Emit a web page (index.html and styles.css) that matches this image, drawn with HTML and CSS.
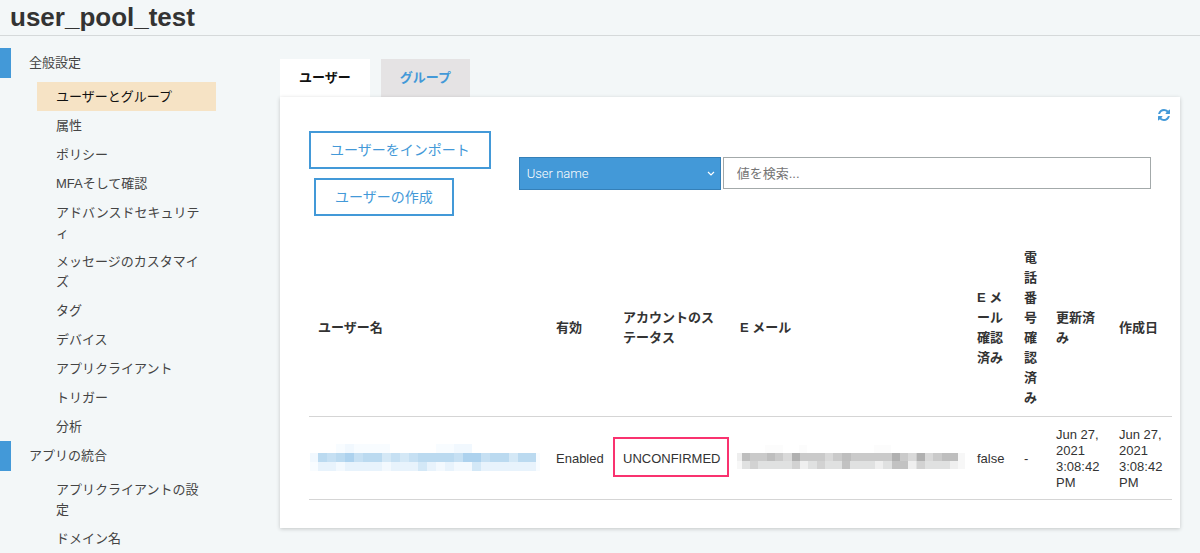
FILE: index.html
```html
<!DOCTYPE html>
<html lang="ja">

<head>
    <meta charset="utf-8">
    <title>user_pool_test</title>
    <link rel="stylesheet" href="styles.css">
</head>

<body>
    <header class="page-header">
        <h1>user_pool_test</h1>
    </header>

    <div class="layout">
        <nav class="sidebar">
            <a class="section" href="#general">全般設定</a>
            <ul>
                <li><a class="active" href="#users">ユーザーとグループ</a></li>
                <li><a href="#attributes">属性</a></li>
                <li><a href="#policies">ポリシー</a></li>
                <li><a href="#mfa">MFAそして確認</a></li>
                <li><a href="#security">アドバンスドセキュリティ</a></li>
                <li><a href="#messages">メッセージのカスタマイズ</a></li>
                <li><a href="#tags">タグ</a></li>
                <li><a href="#devices">デバイス</a></li>
                <li><a href="#clients">アプリクライアント</a></li>
                <li><a href="#triggers">トリガー</a></li>
                <li><a href="#analytics">分析</a></li>
            </ul>
            <a class="section" href="#integration">アプリの統合</a>
            <ul>
                <li><a href="#client-settings">アプリクライアントの設定</a></li>
                <li><a href="#domain">ドメイン名</a></li>
            </ul>
        </nav>

        <main class="content">
            <div class="tabs">
                <a class="tab selected" href="#users">ユーザー</a>
                <a class="tab" href="#groups">グループ</a>
            </div>

            <div class="panel">
                <button class="refresh" type="button" aria-label="更新">
                    <svg viewBox="0 0 1536 1536" width="12" height="12">
                        <path fill="currentColor" d="M1511 928q0 5-1 7-64 268-268 434.500t-478 166.500q-146 0-282.500-55t-243.500-157l-129 129q-19 19-45 19t-45-19-19-45v-448q0-26 19-45t45-19h448q26 0 45 19t19 45-19 45l-137 137q71 66 161 102t187 36q134 0 250-65t186-179q11-17 53-117 8-23 30-23h192q13 0 22.500 9.500t9.500 22.500zm25-800v448q0 26-19 45t-45 19h-448q-26 0-45-19t-19-45 19-45l138-138q-148-137-349-137-134 0-250 65t-186 179q-11 17-53 117-8 23-30 23h-199q-13 0-22.500-9.500t-9.500-22.500v-7q65-268 270-434.500t480-166.500q146 0 284 55.500t245 156.500l130-129q19-19 45-19t45 19 19 45z"/>
                    </svg>
                </button>

                <div class="toolbar">
                    <div class="actions">
                        <button type="button">ユーザーをインポート</button>
                        <button class="create" type="button">ユーザーの作成</button>
                    </div>
                    <div class="search">
                        <div class="select-wrap">
                            <select aria-label="検索する属性">
                                <option>User name</option>
                                <option>Email</option>
                            </select>
                            <svg class="chevron" viewBox="0 0 8 6" width="8" height="6">
                                <path d="M1 1l3 3 3-3" fill="none" stroke="#fff" stroke-width="1.200"/>
                            </svg>
                        </div>
                        <input type="text" aria-label="値を検索" placeholder="値を検索...">
                    </div>
                </div>

                <table class="users">
                    <colgroup>
                        <col>
                        <col class="col-enabled">
                        <col class="col-status">
                        <col>
                        <col class="col-verified">
                        <col class="col-phone">
                        <col class="col-date">
                        <col class="col-date">
                    </colgroup>
                    <thead>
                        <tr>
                            <th>ユーザー名</th>
                            <th>有効</th>
                            <th>アカウントのステータス</th>
                            <th>E メール</th>
                            <th>E メール確認済み</th>
                            <th>電話番号確認済み</th>
                            <th>更新済み</th>
                            <th>作成日</th>
                        </tr>
                    </thead>
                    <tbody>
                        <tr>
                            <td>
                                <svg class="mosaic" viewBox="0 0 230 27" width="230" height="27" shape-rendering="crispEdges">
                                    <path fill="#f8fcff" d="M26 0h9v9h-9zM44 0h36v9h-36zM126 0h18v9h-18z"/>
                                    <path fill="#f1f8fe" d="M35 0h9v9h-9zM144 0h18v9h-18zM0 9h8v9h-8z"/>
                                    <path fill="#f8fcff" d="M0 18h8v9h-8zM226 9h4v18h-4z"/>
                                    <path fill="#bbdaf0" d="M8 9h218v9h-218z"/>
                                    <path fill="#c6e0f3" d="M17 9h9v9h-9zM44 9h9v9h-9zM81 9h9v9h-9zM99 9h9v9h-9zM144 9h9v9h-9zM171 9h9v9h-9z"/>
                                    <path fill="#d4e8f6" d="M72 9h9v9h-9zM90 9h9v9h-9zM199 9h9v9h-9z"/>
                                    <path fill="#add2ee" d="M35 9h9v9h-9zM153 9h18v9h-18z"/>
                                    <path fill="#e8f3fc" d="M8 18h218v9h-218z"/>
                                    <path fill="#f3f9fe" d="M26 18h9v9h-9zM72 18h9v9h-9zM126 18h9v9h-9zM144 18h18v9h-18z"/>
                                    <path fill="#d3e8f7" d="M108 18h9v9h-9zM162 18h9v9h-9z"/>
                                </svg>
                            </td>
                            <td>Enabled</td>
                            <td><span class="status">UNCONFIRMED</span></td>
                            <td>
                                <svg class="mosaic" viewBox="0 0 230 27" width="230" height="27" shape-rendering="crispEdges">
                                    <path fill="#fcfcfc" d="M29 1h18v8h-18zM63 1h8v8h-8zM138 1h17v8h-17z"/>
                                    <path fill="#eee" d="M1 9h5v8h-5z"/>
                                    <path fill="#f7f7f7" d="M1 17h5v8h-5zM222 9h7v16h-7z"/>
                                    <path fill="#cacaca" d="M6 9h216v8h-216z"/>
                                    <path fill="#bebebe" d="M6 9h8v8h-8zM31 9h8v8h-8zM106 9h9v8h-9zM206 9h16v8h-16z"/>
                                    <path fill="#d9d9d9" d="M47 9h9v8h-9zM89 9h8v8h-8zM172 9h8v8h-8zM189 9h8v8h-8z"/>
                                    <path fill="#b0b0b0" d="M56 9h8v8h-8zM156 9h8v8h-8zM181 9h8v8h-8z"/>
                                    <path fill="#e0e1e1" d="M6 17h216v8h-216z"/>
                                    <path fill="#d2d2d2" d="M14 17h8v8h-8zM56 17h8v8h-8zM81 17h8v8h-8zM181 17h8v8h-8z"/>
                                    <path fill="#efefef" d="M64 17h8v8h-8zM139 17h8v8h-8zM172 17h8v8h-8zM214 17h8v8h-8z"/>
                                    <path fill="#c2c2c2" d="M106 17h8v8h-8zM156 17h16v8h-16z"/>
                                </svg>
                            </td>
                            <td>false</td>
                            <td>-</td>
                            <td>Jun 27, 2021 3:08:42 PM</td>
                            <td>Jun 27, 2021 3:08:42 PM</td>
                        </tr>
                    </tbody>
                </table>
            </div>
        </main>
    </div>
</body>

</html>
```

FILE: styles.css
```css
* {
    box-sizing: border-box;
}

body {
    margin: 0;
    background-color: #f3f7f8;
    color: #333;
    font-family: "Liberation Sans", "Noto Sans CJK JP", sans-serif;
    font-size: 13px;
    line-height: 20px;
    line-break: loose;
}

a {
    text-decoration: none;
}

button,
input,
select {
    font-family: inherit;
}

.page-header {
    height: 36px;
    padding: 2px 10px;
    border-bottom: 1px solid #d5d9da;
}

.page-header h1 {
    margin: 0;
    font-size: 26px;
    line-height: 30px;
}

.layout {
    display: flex;
}

/* Sidebar */
.sidebar {
    flex: 0 0 280px;
    padding-top: 12px;
}

.sidebar .section {
    display: block;
    height: 30px;
    margin-bottom: 4px;
    padding: 5px 18px;
    border-left: 11px solid #4399d8;
    color: #444;
}

.sidebar ul {
    width: 179px;
    margin: 0 0 0 37px;
    padding: 0;
    list-style: none;
}

.sidebar li a {
    display: block;
    padding: 5px 10px 4px 19px;
    color: #444;
}

.sidebar li .active {
    background-color: #f6e3c5;
    color: #111;
}

/* Main area */
.content {
    flex: 1;
    min-width: 0;
    padding: 23px 20px 24px 0;
}

.tabs {
    display: flex;
    gap: 11px;
}

.tab {
    padding: 9px 19px;
    background-color: #e5e3e4;
    color: #4399d8;
    font-weight: bold;
}

.tab.selected {
    background-color: #fff;
    color: #111;
}

.panel {
    position: relative;
    padding: 34px 29px 28px;
    background-color: #fff;
    box-shadow: 0 1px 4px rgba(0, 0, 0, 0.2);
}

.refresh {
    position: absolute;
    top: 12px;
    right: 10px;
    padding: 0;
    border: none;
    background: none;
    color: #4399d8;
    line-height: 0;
    cursor: pointer;
}

.toolbar {
    display: flex;
    align-items: flex-start;
    gap: 28px;
    margin-bottom: 22px;
}

.actions {
    display: flex;
    flex-direction: column;
    align-items: flex-start;
    gap: 9px;
}

.actions button {
    height: 38px;
    padding: 0 19px 2px;
    border: 2px solid #4399d8;
    background-color: #fff;
    color: #4399d8;
    font-size: 14px;
    cursor: pointer;
}

.actions .create {
    margin-left: 5px;
}

.search {
    display: flex;
    flex: 1;
    gap: 2px;
    padding-top: 26px;
}

.select-wrap {
    position: relative;
    flex: 0 0 202px;
}

.select-wrap select {
    width: 100%;
    height: 33px;
    padding: 0 7px;
    appearance: none;
    border: 1px solid #3580b8;
    border-radius: 0;
    background-color: #4399d8;
    color: #fff;
    font-family: Roboto, sans-serif;
    font-size: 13px;
    font-weight: 300;
}

.chevron {
    position: absolute;
    top: 14px;
    right: 6px;
    pointer-events: none;
}

.search input {
    flex: 1;
    min-width: 0;
    height: 32px;
    padding: 0 13px;
    border: 1px solid #a3a9aa;
    font-size: 13px;
}

/* User list */
.users {
    width: calc(100% + 21px);
    table-layout: fixed;
    border-collapse: collapse;
}

.col-enabled {
    width: 67px;
}

.col-status {
    width: 117px;
}

.col-verified {
    width: 47px;
}

.col-phone {
    width: 32px;
}

.col-date {
    width: 63px;
}

.users th,
.users td {
    padding: 10px 8px 8px 10px;
    border-bottom: 1px solid #d5d5d5;
    text-align: left;
    vertical-align: middle;
}

.users th:first-child,
.users td:first-child {
    padding-left: 9px;
}

.users td {
    line-height: 16px;
}

.mosaic {
    display: block;
    margin: -9px 0 -5px -4px;
}

.users td:first-child .mosaic {
    margin-left: -8px;
}

.status {
    position: relative;
}

/* Callout frame around the account status */
.status::after {
    content: "";
    position: absolute;
    inset: -14px -8px -11px -10px;
    border: 2px solid #f9326f;
}
```
